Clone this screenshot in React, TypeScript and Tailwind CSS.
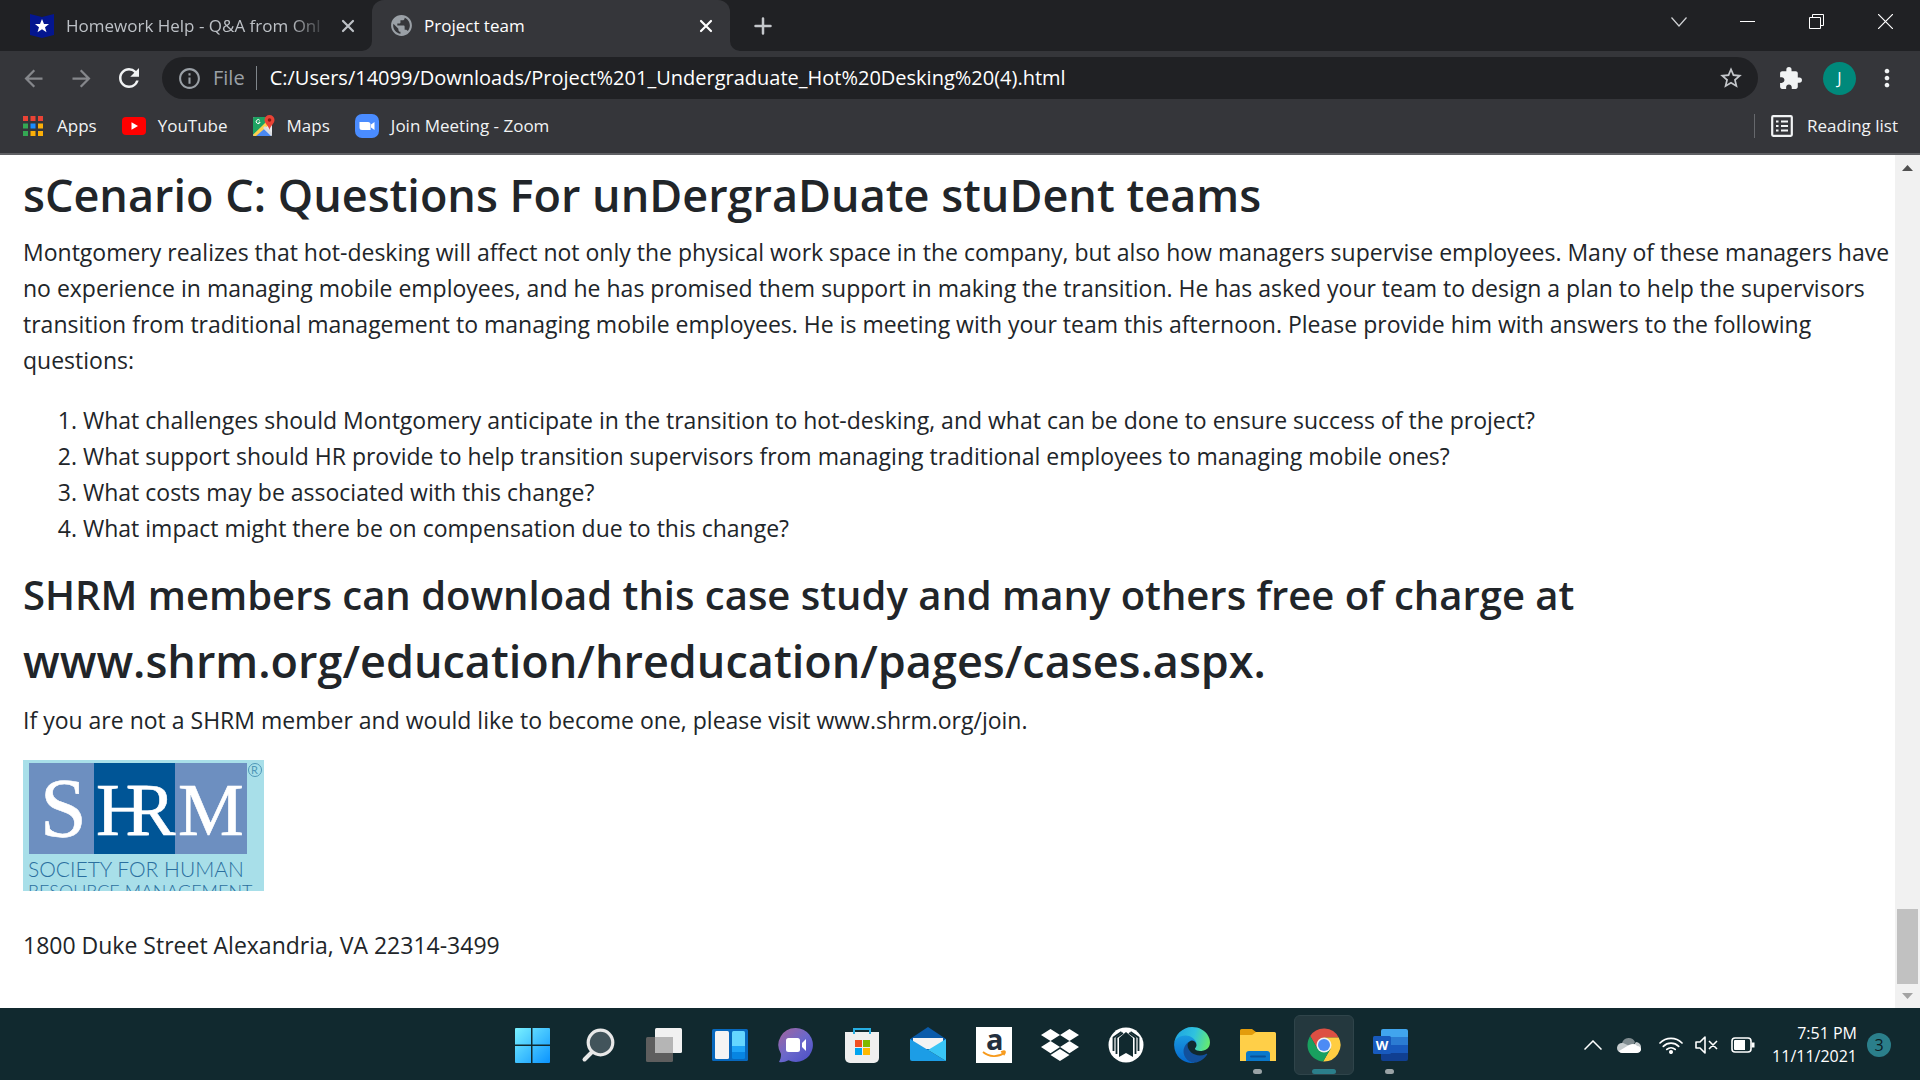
import type { ReactNode } from 'react';
import { FaDropbox } from 'react-icons/fa';
import { MdArrowBack, MdArrowForward, MdExtension, MdInfoOutline, MdMoreVert, MdPublic, MdRefresh, MdStarBorder } from 'react-icons/md';

interface TaskbarItemProps {
  label: string;
  active?: boolean;
  running?: boolean;
  children: ReactNode;
}

const questions = [
  'What challenges should Montgomery anticipate in the transition to hot-desking, and what can be done to ensure success of the project?',
  'What support should HR provide to help transition supervisors from managing traditional employees to managing mobile ones?',
  'What costs may be associated with this change?',
  'What impact might there be on compensation due to this change?',
];

const appsColors = ['#ea4335', '#ea4335', '#ea4335', '#34a853', '#1a8cff', '#fbaf08', '#34a853', '#fbaf08', '#fbaf08'];

const CloseIcon = () => (
  <svg width="14" height="14" viewBox="0 0 14 14" stroke="currentColor" strokeWidth="2.2" strokeLinecap="round">
    <path d="M2 2l10 10M12 2L2 12" />
  </svg>
);

const TabStrip = () => (
  <div className="flex h-[51px] shrink-0 bg-[#202124] text-[17px]">
    <div className="flex w-[372px] items-center pl-[30px] pr-[17px] text-[#bdc1c6]">
      <svg width="24" height="24" viewBox="0 0 24 24" className="shrink-0">
        <path d="M0 0l12 3 12-3v21l-12 3-12-3z" fill="#04168f" />
        <path d="M12 5l2 5h5l-4 3.300 1.500 5-4.500-3-4.500 3 1.500-5-4-3.300h5z" fill="#fff" />
      </svg>
      <button className="ml-3 flex-1 whitespace-nowrap text-left [mask-image:linear-gradient(to_right,black_85%,transparent)]">
        Homework Help - Q&amp;A from Onl
      </button>
      <button aria-label="Close tab" className="ml-3"><CloseIcon /></button>
    </div>
    <div className="relative flex w-[358px] items-center rounded-t-xl bg-[#35363a] pl-[17px] pr-[17px] text-white">
      <svg width="10" height="10" viewBox="0 0 10 10" className="absolute -left-[10px] bottom-0">
        <path d="M10 0v10H0A10 10 0 0 0 10 0" fill="#35363a" />
      </svg>
      <svg width="10" height="10" viewBox="0 0 10 10" className="absolute -right-[10px] bottom-0">
        <path d="M0 0v10h10A10 10 0 0 1 0 0" fill="#35363a" />
      </svg>
      <MdPublic size={25} color="#9aa0a6" />
      <button className="ml-[10px] flex-1 text-left">Project team</button>
      <button aria-label="Close tab"><CloseIcon /></button>
    </div>
    <button aria-label="New tab" className="ml-6 text-[#c4c7cb]">
      <svg width="18" height="18" viewBox="0 0 18 18" stroke="currentColor" strokeWidth="2.500" strokeLinecap="round">
        <path d="M9 1.500v15M1.500 9h15" />
      </svg>
    </button>
    <div className="ml-auto flex h-[43px] text-white">
      <button aria-label="Search tabs" className="flex w-[69px] items-center justify-center">
        <svg width="16" height="10" viewBox="0 0 16 10" fill="none" stroke="#d0d2d5" strokeWidth="1.200"><path d="M.5 .5L8 9l7.500-8.500" /></svg>
      </button>
      <button aria-label="Minimize" className="flex w-[69px] items-center justify-center">
        <svg width="15" height="15" viewBox="0 0 15 15" stroke="currentColor"><path d="M0 7.500h15" /></svg>
      </button>
      <button aria-label="Restore" className="flex w-[69px] items-center justify-center">
        <svg width="15" height="15" viewBox="0 0 15 15" fill="none" stroke="currentColor"><path d="M.5 3.500h11v11h-11zM3.500 3.500v-3h11v11h-3" /></svg>
      </button>
      <button aria-label="Close window" className="flex w-[69px] items-center justify-center">
        <svg width="15" height="15" viewBox="0 0 15 15" stroke="currentColor" strokeWidth="1.200"><path d="M0 0l15 15M15 0L0 15" /></svg>
      </button>
    </div>
  </div>
);

const Toolbar = () => (
  <div className="flex h-[54px] shrink-0 items-center bg-[#35363a] pr-[19px]">
    <button aria-label="Back" className="ml-5 text-[#85878b]"><MdArrowBack size={27} /></button>
    <button aria-label="Forward" className="ml-[21px] text-[#85878b]"><MdArrowForward size={27} /></button>
    <button aria-label="Reload" className="ml-[19px] text-[#f1f3f4]"><MdRefresh size={30} /></button>
    <div className="ml-[18px] flex h-[42px] flex-1 items-center rounded-full bg-[#202124] pl-[15px] pr-[14px]">
      <MdInfoOutline size={25} color="#9aa0a6" />
      <label htmlFor="address" className="ml-[11px] text-xl text-[#9aa0a6]">File</label>
      <div className="ml-[11px] h-6 w-px bg-[#80868b]" />
      <input
        id="address"
        className="ml-[13px] flex-1 bg-transparent text-xl text-white outline-none"
        defaultValue="C:/Users/14099/Downloads/Project%201_Undergraduate_Hot%20Desking%20(4).html"
      />
      <button aria-label="Bookmark this tab" className="text-[#c4c7cb]"><MdStarBorder size={26} /></button>
    </div>
    <button aria-label="Extensions" className="ml-5 text-[#f1f3f4]"><MdExtension size={25} /></button>
    <button className="ml-5 size-[33px] rounded-full bg-[#00897b] text-base text-white">J</button>
    <button aria-label="Menu" className="ml-[17px] text-[#f1f3f4]"><MdMoreVert size={28} /></button>
  </div>
);

const BookmarksBar = () => (
  <div className="flex h-[50px] shrink-0 items-center border-b-2 border-[#5f6064] bg-[#35363a] pr-[22px] pb-[7px] pl-[23px] text-[17px] text-[#f1f3f4]">
    <a href="#apps" className="flex items-center gap-[14px]">
      <svg width="20" height="20" viewBox="0 0 20 20">
        {appsColors.map((color, i) => (
          <rect key={i} x={(i % 3) * 7.5} y={Math.floor(i / 3) * 7.5} width="5" height="5" fill={color} />
        ))}
      </svg>
      Apps
    </a>
    <a href="#youtube" className="ml-[25px] flex items-center gap-3">
      <svg width="24" height="18" viewBox="0 0 24 18">
        <rect width="24" height="18" rx="4" fill="#f00" />
        <path d="M9.500 5.200v7.600L16 9z" fill="#fff" />
      </svg>
      YouTube
    </a>
    <a href="#maps" className="ml-[25px] flex items-center gap-3">
      <svg width="22" height="22" viewBox="0 0 22 22">
        <rect y="2" width="19" height="19" rx="1.500" fill="#e8eaed" />
        <path d="M1.500 2H14l-2 7L0 20V3.500A1.500 1.500 0 0 1 1.500 2" fill="#1ea362" />
        <path d="M2 21l8-8 8 8z" fill="#4a89f3" />
        <path d="M0 20L14 6l3 3L3 21H1z" fill="#ffd04b" />
        <path d="M10 13l2-2 7 7v3z" fill="#dadce0" />
        <path d="M6.800 5.400a2 2 0 1 0 .3 1.800H5.500" fill="none" stroke="#fff" />
        <path d="M16.500 0a5 5 0 0 0-5 5c0 4 4 5 5 10 1-5 5-6 5-10a5 5 0 0 0-5-5" fill="#ea4335" />
        <circle cx="16.500" cy="5" r="1.800" fill="#8b1a10" />
      </svg>
      Maps
    </a>
    <a href="#zoom" className="ml-[25px] flex items-center gap-3">
      <svg width="24" height="24" viewBox="0 0 24 24">
        <rect width="24" height="24" rx="7" fill="#4a8cff" />
        <path d="M4.500 8H13a2.500 2.500 0 0 1 2.500 2.500V16H7a2.500 2.500 0 0 1-2.500-2.500zM16 10.500L19.500 8v8L16 13.500z" fill="#fff" />
      </svg>
      Join Meeting - Zoom
    </a>
    <div className="ml-auto h-6 w-px bg-[#66686c]" />
    <button className="ml-4 flex items-center gap-[14px]">
      <svg width="22" height="22" viewBox="0 0 22 22" fill="none" stroke="#f1f3f4">
        <rect x="1.200" y="1.200" width="19.600" height="19.600" rx="1" strokeWidth="2.200" />
        <path d="M5 6.500h2.500M5 11h2.500M5 15.500h2.500M10 6.500h7M10 11h7M10 15.500h7" strokeWidth="2" />
      </svg>
      Reading list
    </button>
  </div>
);

const ShrmLogo = () => (
  <svg width="241" height="131" viewBox="0 0 241 131" role="img" aria-label="SHRM" className="block">
    <rect width="241" height="131" fill="#a8dfe9" />
    <rect x="6" y="3" width="65" height="91" fill="#6d8fc0" />
    <rect x="71" y="3" width="81" height="91" fill="#005596" />
    <rect x="152" y="3" width="72" height="91" fill="#6d8fc0" />
    {/* H and R share a stem */}
    <g fill="#fff" stroke="#fff" strokeWidth="0.6" fontFamily="'Liberation Serif', serif" fontSize="74">
      <text x="17" y="77" fontSize="84">S</text>
      <text x="73" y="75">H</text>
      <text x="103" y="75">R</text>
      <text x="155" y="75">M</text>
    </g>
    <g fill="#2b6f9f" fontFamily="Lato, sans-serif" fontWeight="300">
      <text x="5" y="117" fontSize="21">SOCIETY FOR HUMAN</text>
      <text x="5" y="138" fontSize="18">RESOURCE MANAGEMENT</text>
    </g>
    <circle cx="232" cy="10" r="6.500" fill="none" stroke="#4f97b8" />
    <text x="228" y="14" fill="#4f97b8" fontFamily="Lato, sans-serif" fontSize="11">R</text>
  </svg>
);

const Page = () => (
  <div className="flex min-h-0 flex-1 bg-white">
    <main className="flex-1 overflow-hidden pt-[11px] pr-1 pl-[23px] text-[23px] leading-9 text-[#212529]">
      <h1 className="mb-[10px] text-[45px] leading-[58px] font-semibold">sCenario C: Questions For unDergraDuate stuDent teams</h1>
      <p className="mb-6">
        Montgomery realizes that hot-desking will affect not only the physical work space in the company, but also how managers
        supervise employees. Many of these managers have no experience in managing mobile employees, and he has promised them
        support in making the transition. He has asked your team to design a plan to help the supervisors transition from
        traditional management to managing mobile employees. He is meeting with your team this afternoon. Please provide him with
        answers to the following questions:
      </p>
      <ol className="mb-6 list-decimal pl-[60px]">
        {questions.map((question) => (
          <li key={question}>{question}</li>
        ))}
      </ol>
      <h2 className="mb-3 text-[40px] leading-[50px] font-semibold">SHRM members can download this case study and many others free of charge at</h2>
      <h1 className="mb-3 text-[45px] leading-[58px] font-semibold">www.shrm.org/education/hreducation/pages/cases.aspx.</h1>
      <p className="mb-[22px]">If you are not a SHRM member and would like to become one, please visit www.shrm.org/join.</p>
      <ShrmLogo />
      <p className="mt-9">1800 Duke Street Alexandria, VA 22314-3499</p>
    </main>
    <div className="flex w-[25px] shrink-0 flex-col items-center bg-[#f1f1f1]">
      <svg width="25" height="25" viewBox="0 0 25 25"><path d="M7 16l5.500-6 5.500 6z" fill="#505050" /></svg>
      <div className="mt-auto h-[75px] w-[21px] bg-[#c1c1c1]" />
      <svg width="25" height="24" viewBox="0 0 25 24"><path d="M7 9l5.500 6L18 9z" fill="#a3a3a3" /></svg>
    </div>
  </div>
);

const TaskbarItem = ({ label, active, running, children }: TaskbarItemProps) => (
  <button
    aria-label={label}
    className={`relative mx-[3px] flex size-[60px] items-center justify-center rounded-md ${active ? 'border border-[#2f444a] bg-[#24383e]' : ''}`}
  >
    {children}
    {active && <span className="absolute bottom-0 h-[5px] w-6 rounded-full bg-[#2b7f8b]" />}
    {running && <span className="absolute bottom-px h-[5px] w-[9px] rounded-full bg-[#9aa3a6]" />}
  </button>
);

const Taskbar = () => (
  <footer className="grid h-[72px] shrink-0 grid-cols-[1fr_auto_1fr] items-center bg-[#11292f] pt-[2px] pl-px text-white">
    <div />
    <div className="flex">
      <TaskbarItem label="Start">
        <svg width="36" height="36" viewBox="0 0 36 36">
          <defs>
            <linearGradient id="start" x1="0" y1="0" x2="36" y2="36" gradientUnits="userSpaceOnUse">
              <stop stopColor="#7df4ff" />
              <stop offset="1" stopColor="#0a93ff" />
            </linearGradient>
          </defs>
          <path d="M2 1h15v16.500H1V2a1 1 0 0 1 1-1M18.500 1H35a1 1 0 0 1 1 1v15.500H18.500zM1 19h16v17H2a1 1 0 0 1-1-1zM18.500 19H36v16a1 1 0 0 1-1 1H18.500z" fill="url(#start)" />
        </svg>
      </TaskbarItem>
      <TaskbarItem label="Search">
        <svg width="36" height="36" viewBox="0 0 36 36" stroke="#e8e8e8">
          <path d="M12 25l-7.500 7.500" strokeWidth="4" strokeLinecap="round" />
          <circle cx="20.500" cy="15.500" r="12.300" fill="#42545b" strokeWidth="3.200" />
        </svg>
      </TaskbarItem>
      <TaskbarItem label="Task view">
        <svg width="36" height="36" viewBox="0 0 36 36">
          <rect x="9" y="1" width="27" height="25" rx="1.500" fill="#f1f1f1" />
          <rect y="10" width="27" height="25" rx="1.500" fill="#5e5e5e" />
          <path d="M9 10h18v16H9z" fill="#b5b5b5" />
        </svg>
      </TaskbarItem>
      <TaskbarItem label="Widgets">
        <svg width="36" height="36" viewBox="0 0 36 36">
          <rect y="2" width="36" height="32" rx="1.500" fill="#0768be" />
          <rect x="3" y="4" width="14" height="28" rx="1.500" fill="#f4f4f4" />
          <path d="M20 5.500A1.500 1.500 0 0 1 21.500 4h10A1.500 1.500 0 0 1 33 5.500V19H20z" fill="#65d6ff" />
          <path d="M20 19h13v6H20z" fill="#1ea4f7" />
          <path d="M20 25h13v5.500a1.500 1.500 0 0 1-1.500 1.500h-10a1.500 1.500 0 0 1-1.500-1.500z" fill="#0785e2" />
        </svg>
      </TaskbarItem>
      <TaskbarItem label="Chat">
        <svg width="36" height="36" viewBox="0 0 36 36">
          <defs>
            <linearGradient id="chat" x1="6" y1="5" x2="30" y2="32" gradientUnits="userSpaceOnUse">
              <stop stopColor="#9565a8" />
              <stop offset=".5" stopColor="#6b68cb" />
              <stop offset="1" stopColor="#5153c8" />
            </linearGradient>
          </defs>
          <path d="M18 1a17 17 0 1 1-7.500 32.300C7.500 35 4 35.500 1 35c1.500-2.500 2-5 2-8A17 17 0 0 1 18 1" fill="url(#chat)" />
          <rect x="8" y="11" width="14" height="14" rx="2.500" fill="#fff" />
          <path d="M24 16l4-4v12l-4-4z" fill="#fff" />
        </svg>
      </TaskbarItem>
      <TaskbarItem label="Microsoft Store">
        <svg width="36" height="36" viewBox="0 0 36 36">
          <path d="M1 5h34v26a5 5 0 0 1-5 5H6a5 5 0 0 1-5-5z" fill="#efefef" />
          <path d="M10 7V2h16v5" fill="none" stroke="#27aee2" strokeWidth="2" />
          <path d="M11 13h7v7h-7z" fill="#f25022" />
          <path d="M19 13h7v7h-7z" fill="#7fba00" />
          <path d="M11 21h7v7h-7z" fill="#00a4ef" />
          <path d="M19 21h7v7h-7z" fill="#ffb900" />
        </svg>
      </TaskbarItem>
      <TaskbarItem label="Mail">
        <svg width="36" height="36" viewBox="0 0 36 36">
          <path d="M0 12L18 0l18 12v12H0z" fill="#0a5baa" />
          <path d="M3 11h30v11H3z" fill="#f3f3f3" />
          <path d="M0 12l36 22H2a2 2 0 0 1-2-2z" fill="#1c9de6" />
          <path d="M36 12L18 23l18 11z" fill="#39c5f5" />
        </svg>
      </TaskbarItem>
      <TaskbarItem label="Amazon">
        <svg width="36" height="36" viewBox="0 0 36 36">
          <path d="M0 0h36v36H0z" fill="#fff" />
          <text x="10" y="23" fontFamily="'Open Sans', sans-serif" fontWeight="700" fontSize="29" fill="#232f3e">a</text>
          <path d="M7 25c6 5 15 5.500 21 1M25 25c3-1 4-1 4 0s-.5 2-1.500 3" fill="none" stroke="#f79a1c" strokeWidth="1.800" />
        </svg>
      </TaskbarItem>
      <TaskbarItem label="Dropbox"><FaDropbox size={38} /></TaskbarItem>
      <TaskbarItem label="Reader">
        <svg width="36" height="36" viewBox="0 0 36 36">
          <circle cx="18" cy="18" r="17.500" fill="#fff" />
          <path d="M18 5l7 6v19l-7-4-7 4V11z" fill="#11292f" />
          <path d="M8.500 27V10.500L15 6M27.500 27V10.500L21 6" fill="none" stroke="#11292f" strokeWidth="1.800" />
          <path d="M5.500 24V10.500l8-5.500M30.500 24V10.500L22.500 5" fill="none" stroke="#11292f" strokeWidth="1.800" />
        </svg>
      </TaskbarItem>
      <TaskbarItem label="Microsoft Edge">
        <svg width="36" height="36" viewBox="4 4 257 257">
          <defs>
            <linearGradient id="edgeTop" x1="20" y1="60" x2="255" y2="130" gradientUnits="userSpaceOnUse">
              <stop stopColor="#20a7e0" />
              <stop offset=".5" stopColor="#2fc2df" />
              <stop offset="1" stopColor="#66eb6e" />
            </linearGradient>
            <linearGradient id="edgeMid" x1="80" y1="50" x2="80" y2="255" gradientUnits="userSpaceOnUse">
              <stop stopColor="#1b9de2" />
              <stop offset="1" stopColor="#0668cd" />
            </linearGradient>
          </defs>
          <path d="M235.680 195.460a93.730 93.730 0 0 1-10.540 4.710 101.870 101.870 0 0 1-35.900 6.460c-47.320 0-88.540-32.550-88.540-74.320A31.480 31.480 0 0 1 117.130 105c-42.800 1.800-53.800 46.400-53.800 72.530 0 73.880 68.090 81.370 82.760 81.370 7.910 0 19.840-2.300 27-4.560l1.310-.44A128.340 128.340 0 0 0 241 201.100a4 4 0 0 0-5.320-5.640Z" fill="#12509c" />
          <path d="M110.340 246.340A79.200 79.200 0 0 1 87.600 225a80.720 80.720 0 0 1 29.530-120c3.120-1.470 8.450-4.130 15.540-4a32.350 32.350 0 0 1 25.690 13 31.880 31.880 0 0 1 6.360 18.660c0-.21 24.460-79.600-80-79.600-43.900 0-80 41.660-80 78.210a130.150 130.150 0 0 0 12.110 56 128 128 0 0 0 156.380 67.110 75.550 75.550 0 0 1-62.780-8Z" fill="url(#edgeMid)" />
          <path d="M156.940 153.780c-.81 1.050-3.300 2.500-3.300 5.660 0 2.610 1.700 5.120 4.720 7.230 14.380 10 41.490 8.680 41.560 8.680a59.560 59.560 0 0 0 30.270-8.350 61.380 61.380 0 0 0 30.430-52.880c.26-22.410-8-37.310-11.340-43.910C228.090 28.760 182.350 4.810 132.610 4.810a128 128 0 0 0-128 126.200c.48-36.540 36.800-66.050 80-66.050 3.500 0 23.460.34 42 10.070 16.340 8.580 24.900 18.940 30.850 29.210 6.180 10.670 7.280 24.150 7.280 29.520s-2.740 13.330-7.800 19.900Z" fill="url(#edgeTop)" />
        </svg>
      </TaskbarItem>
      <TaskbarItem label="File Explorer" running>
        <svg width="36" height="36" viewBox="0 0 36 36">
          <path d="M0 3.500A1.500 1.500 0 0 1 1.500 2H12l4 3v6H0z" fill="#e39c0b" />
          <path d="M0 8h12l4-3h18.500A1.500 1.500 0 0 1 36 6.500V34H0z" fill="#ffcf48" />
          <path d="M6 34v-7a3 3 0 0 1 3-3h18a3 3 0 0 1 3 3v7z" fill="#0a78cb" />
          <path d="M11 29.500h14" stroke="#08529a" strokeWidth="2" strokeLinecap="round" />
        </svg>
      </TaskbarItem>
      <TaskbarItem label="Google Chrome" active>
        <svg width="36" height="36" viewBox="0 0 48 48">
          <path d="M43.600 14A22 22 0 0 0 5.540 12.030L15.340 29 24 24V14z" fill="#dd4f43" />
          <path d="M43.600 14a22 22 0 0 1-20.740 31.970L32.660 29 24 24V14z" fill="#ffcd42" />
          <path d="M5.540 12.030a22 22 0 0 0 17.320 33.940L32.660 29 24 24l-8.660 5z" fill="#19a05f" />
          <circle cx="24" cy="24" r="10" fill="#f1f1f1" />
          <circle cx="24" cy="24" r="8" fill="#4c8bf5" />
        </svg>
      </TaskbarItem>
      <TaskbarItem label="Word" running>
        <svg width="36" height="36" viewBox="0 0 36 36">
          <path d="M9 4a2 2 0 0 1 2-2h23a2 2 0 0 1 2 2v6H9z" fill="#41a5ee" />
          <path d="M9 10h27v8H9z" fill="#2b7cd3" />
          <path d="M9 18h27v8H9z" fill="#185abd" />
          <path d="M9 26h27v6a2 2 0 0 1-2 2H11a2 2 0 0 1-2-2z" fill="#103f91" />
          <rect x="1" y="9" width="18" height="18" rx="1.500" fill="#185abd" />
          <text x="10" y="23" textAnchor="middle" fontFamily="'Open Sans', sans-serif" fontWeight="700" fontSize="13" fill="#fff">W</text>
        </svg>
      </TaskbarItem>
    </div>
    <div className="flex items-center justify-end pr-[29px]">
      <button aria-label="Show hidden icons">
        <svg width="18" height="10" viewBox="0 0 18 10" fill="none" stroke="#fff" strokeWidth="1.500"><path d="M.5 9.500L9 1l8.500 8.500" /></svg>
      </button>
      <svg width="24" height="16" viewBox="0 0 24 16" className="ml-[15px]">
        <path d="M5 6a7 7 0 0 1 13-1l-3 5H4z" fill="#7f8b8f" />
        <path d="M0 11a5 5 0 0 1 6-5l9 4 4-5a5 5 0 0 1 5 5.500A5 5 0 0 1 19 16H5a5 5 0 0 1-5-5" fill="#c5cbcd" />
        <path d="M2 14l10-6c4-2 7-1 8 1 5 0 6 7-1 7H5a4 4 0 0 1-3-2" fill="#fff" />
      </svg>
      <button aria-label="Network, sound and battery" className="ml-[18px] flex items-center gap-3">
        <svg width="24" height="18" viewBox="0 0 24 18" fill="none" stroke="#fff" strokeWidth="1.700" strokeLinecap="round">
          <path d="M1 7a15.500 15.500 0 0 1 22 0M4.300 10.300a11 11 0 0 1 15.400 0M7.800 13.400a6.500 6.500 0 0 1 8.400 0" />
          <circle cx="12" cy="16" r="1.200" fill="#fff" />
        </svg>
        <svg width="24" height="18" viewBox="0 0 24 18" fill="none" stroke="#fff" strokeWidth="1.600" strokeLinejoin="round">
          <path d="M1 6h4l5-5v16l-5-5H1zM14 5l8 8M22 5l-8 8" />
        </svg>
        <svg width="24" height="16" viewBox="0 0 24 16" fill="none" stroke="#fff" strokeWidth="1.600">
          <rect x="1" y="1" width="19" height="14" rx="3" />
          <path d="M3 4a1 1 0 0 1 1-1h10v10H4a1 1 0 0 1-1-1z" fill="#fff" stroke="none" />
          <path d="M22 5.500v5" strokeWidth="3" />
        </svg>
      </button>
      <div className="ml-[17px] text-right text-base leading-[23px]">
        <div>7:51 PM</div>
        <div>11/11/2021</div>
      </div>
      <div className="ml-[10px] flex size-6 items-center justify-center rounded-full bg-[#2b7f8b] text-base text-[#0c1a1e]">3</div>
    </div>
  </footer>
);

const App = () => (
  <div className="flex h-screen flex-col font-['Open_Sans',sans-serif]">
    <TabStrip />
    <Toolbar />
    <BookmarksBar />
    <Page />
    <Taskbar />
  </div>
);

export default App;
